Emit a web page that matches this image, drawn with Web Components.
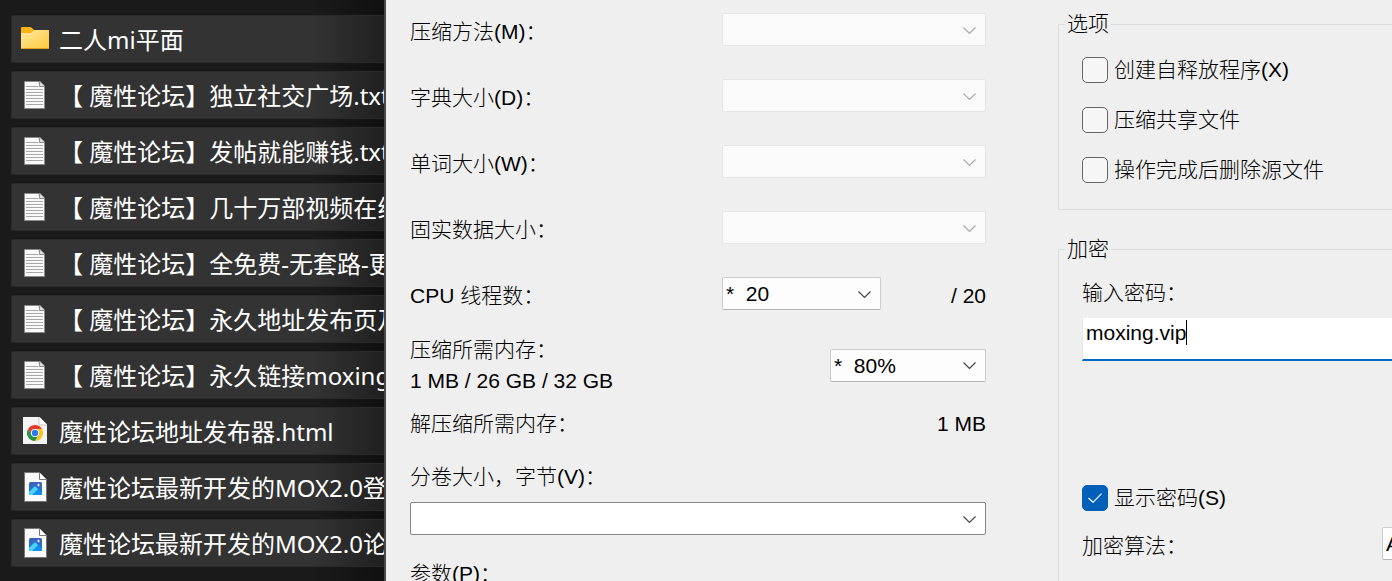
<!DOCTYPE html>
<html lang="zh-CN">
<head>
<meta charset="utf-8">
<title>压缩</title>
<style>
  html, body { margin: 0; height: 100%; }
  body { overflow: hidden; background: #1a1a1a; }
</style>
</head>
<body>
<app-desktop>
  <file-list slot="files">
    <file-row kind="folder">二人mi平面</file-row>
    <file-row kind="text">【 魔性论坛】独立社交广场.txt</file-row>
    <file-row kind="text">【 魔性论坛】发帖就能赚钱.txt</file-row>
    <file-row kind="text">【 魔性论坛】几十万部视频在线</file-row>
    <file-row kind="text">【 魔性论坛】全免费-无套路-更</file-row>
    <file-row kind="text">【 魔性论坛】永久地址发布页及</file-row>
    <file-row kind="text">【 魔性论坛】永久链接moxing</file-row>
    <file-row kind="chrome">魔性论坛地址发布器.html</file-row>
    <file-row kind="image">魔性论坛最新开发的MOX2.0登</file-row>
    <file-row kind="image">魔性论坛最新开发的MOX2.0论</file-row>
  </file-list>
  <archive-dialog slot="dialog"></archive-dialog>
</app-desktop>

<script>
class BaseElement extends HTMLElement {
  constructor() {
    super();
    this.attachShadow({ mode: 'open' });
  }
  connectedCallback() {
    if (!this.shadowRoot.childNodes.length) this.shadowRoot.innerHTML = this.template();
  }
}

customElements.define('app-desktop', class extends BaseElement {
  template() {
    return `
      <style>
        :host { display: grid; grid-template-columns: 384px minmax(0, 1fr); height: 100vh; overflow: hidden; }
      </style>
      <slot name="files"></slot>
      <slot name="dialog"></slot>`;
  }
});

customElements.define('file-list', class extends BaseElement {
  template() {
    return `
      <style>
        :host {
          display: flex; flex-direction: column; gap: 8px;
          overflow: hidden; box-sizing: border-box;
          padding: 15px 0 0 11px; color: #fff;
          background: linear-gradient(90deg, #1a1a1a calc(100% - 70px), #101010);
          font: 24px/32px "Noto Sans", "Noto Sans CJK SC", sans-serif;
        }
      </style>
      <slot></slot>`;
  }
});

const ICONS = {
  folder: `
    <defs><linearGradient id="g" x1="0" y1="0" x2="1" y2="1"><stop offset="0" stop-color="#ffe9a3"/><stop offset="1" stop-color="#ffc937"/></linearGradient></defs>
    <path d="M2 5a1 1 0 0 1 1-1h8q1 0 2 1l2 2h14a1 1 0 0 1 1 1v14H2z" fill="#f8b315"/>
    <path d="M2 10h9q1 0 2-1l2-2h14a1 1 0 0 1 1 1v17a1 1 0 0 1-1 1H3a1 1 0 0 1-1-1z" fill="url(#g)"/>
    <path d="M2 25a1 1 0 0 0 1 1h26a1 1 0 0 0 1-1z" fill="#e0a21b"/>`,
  text: `
    <path d="M5.500 2.500h15.500l4.500 4.500v22.500h-20z" fill="#fafafa" stroke="#8a8a8a"/>
    <path d="M20.500 2.500v5h5" fill="#ddd" stroke="#8a8a8a"/>
    <path d="M7 7.500h12M7 10.500h17M7 13.500h17M7 16.500h17M7 19.500h17M7 22.500h17M7 25.500h17" stroke="#a8a8a8"/>`,
  chrome: `
    <path d="M4 2h17l7 7v20H4z" fill="#f4f4f4"/>
    <path d="M20 2v8h8z" fill="#fff"/><path d="M20 2v8h8" fill="none" stroke="#c8c8c8"/><path d="M21 2h7v7z" fill="#333"/>
    <circle cx="16" cy="18" r="8" fill="#fff"/>
    <path d="M9.070 14A8 8 0 0 1 22.930 14H16a4 4 0 0 0-3.460 6z" fill="#e33b2e"/>
    <path d="M22.930 14A8 8 0 0 1 16 26l3.460-6A4 4 0 0 0 16 14z" fill="#fcc31e"/>
    <path d="M16 26A8 8 0 0 1 9.070 14l3.470 6A4 4 0 0 0 19.460 20z" fill="#229342"/>
    <circle cx="16" cy="18" r="4" fill="#fff"/><circle cx="16" cy="18" r="3.200" fill="#2b7de9"/>`,
  image: `
    <defs><linearGradient id="b" x1="0" y1="0" x2="0" y2="1"><stop offset="0" stop-color="#3a5fb8"/><stop offset="1" stop-color="#1583dc"/></linearGradient></defs>
    <path d="M5.500 1.500H20.500l7 7v22h-22z" fill="#fbfbfb" stroke="#777"/>
    <path d="M20.500 1.500v7h7" fill="#fff" stroke="#777"/>
    <rect x="10" y="11" width="13" height="13" rx="1.500" fill="url(#b)"/>
    <path d="M10 21l5-5q1-1 2 0l6 6v.500a1.500 1.500 0 0 1-1.500 1.500h-10A1.500 1.500 0 0 1 10 22.500z" fill="#1291ea"/>
    <path d="M10 21l5-5q1-1 2 0l2 2-6 6h-1.500A1.500 1.500 0 0 1 10 22.500z" fill="#4cd2f8"/>
    <path d="M19.500 12l.5 1.500 1.500.5-1.500.5-.5 1.500-.5-1.500-1.500-.5 1.500-.5z" fill="#fff"/>`
};

customElements.define('file-row', class extends BaseElement {
  template() {
    return `
      <style>
        /* the right end fades into the shadow that the dialog casts */
        :host {
          display: flex; align-items: center; gap: 8px; flex: none;
          box-sizing: border-box; height: 48px; padding-left: 7px;
          background: linear-gradient(90deg, #333 calc(100% - 70px), #202020);
          border: 1px solid #2a2a2a; border-right: 0;
          border-radius: 2px 0 0 2px; white-space: pre;
        }
        svg { width: 32px; height: 32px; flex: none; }
        span { padding-top: 2px; }
      </style>
      <svg viewBox="0 0 32 32" aria-hidden="true">${ICONS[this.getAttribute('kind')]}</svg>
      <span><slot></slot></span>`;
  }
});

/* Label with a drop-down; "stacked" puts the label above the control. */
customElements.define('combo-field', class extends BaseElement {
  template() {
    const value = this.getAttribute('value') || '';
    return `
      <style>
        :host { display: flex; justify-content: space-between; align-items: center; line-height: 31px; }
        :host([stacked]) { flex-direction: column; align-items: stretch; gap: 10px; }
        label { padding-top: var(--drop, 4px); white-space: nowrap; }
        :host([stacked]) label { padding-top: 0; }
        .side { display: flex; justify-content: space-between; width: var(--side, 264px); }
        :host([stacked]) .side { width: auto; }
        .box { display: grid; align-items: center; width: var(--combo, 100%); }
        select, svg { grid-area: 1 / 1; }
        select {
          appearance: none; box-sizing: border-box; width: 100%; height: 33px; margin: 0;
          padding: 0 32px 0 3px; font: inherit; line-height: 31px; color: #000;
          background: #fdfdfd; border: 1px solid #ccc; border-bottom-color: #b4b4b4; border-radius: 2px;
        }
        select:disabled { background: #fafafa; border-color: #e6e6e6; opacity: 1; }
        :host([stacked]) select { background: #fff; border-color: #868686; }
        svg { justify-self: end; width: 14px; height: 8px; margin-right: 9px; margin-top: 2px; pointer-events: none; fill: none; stroke: #444; }
        select:disabled + svg { stroke: #aaa; }
        .after { padding-top: 4px; }
      </style>
      <label for="s"><slot></slot></label>
      <div class="side">
        <div class="box">
          <select id="s" ${this.hasAttribute('disabled') ? 'disabled' : ''}><option>${value}</option></select>
          <svg viewBox="0 0 14 8" aria-hidden="true"><path d="M.500.500 6.500 6.500 12.500.500" stroke-width="1.200"/></svg>
        </div>
        <span class="after"><slot name="after"></slot></span>
      </div>`;
  }
});

customElements.define('check-item', class extends BaseElement {
  template() {
    return `
      <style>
        :host { display: block; }
        label { display: flex; align-items: center; gap: 6px; line-height: 26px; white-space: nowrap; }
        .box { display: grid; place-items: center; }
        input, svg { grid-area: 1 / 1; }
        input {
          appearance: none; box-sizing: border-box; width: 26px; height: 26px; margin: 0;
          background: #f6f6f6; border: 1px solid #666; border-radius: 5px;
        }
        input:checked { background: #005fb8; border-color: #005fb8; }
        svg { width: 14px; height: 10px; fill: none; stroke: #fff; stroke-width: 1.200; visibility: hidden; pointer-events: none; }
        input:checked + svg { visibility: visible; }
      </style>
      <label>
        <span class="box">
          <input type="checkbox" ${this.hasAttribute('checked') ? 'checked' : ''}>
          <svg viewBox="0 0 14 10" aria-hidden="true"><path d="M.500 5 5 9.300 13.500.700"/></svg>
        </span>
        <span><slot></slot></span>
      </label>`;
  }
});

customElements.define('group-box', class extends BaseElement {
  template() {
    return `
      <style>
        :host { display: block; }
        fieldset { box-sizing: border-box; height: 100%; min-width: 0; margin: 0; padding: 0 23px; border: 1px solid #dcdcdc; }
        legend { margin-left: -17px; padding: 0 2px; line-height: 26px; }
      </style>
      <fieldset>
        <legend><slot name="title"></slot></legend>
        <slot></slot>
      </fieldset>`;
  }
});

customElements.define('password-field', class extends BaseElement {
  template() {
    return `
      <style>
        :host { display: block; }
        label { display: block; line-height: 26px; }
        .box {
          display: flex; align-items: flex-start; box-sizing: border-box; height: 43px; margin-top: 12px;
          padding: 2px 0 0 3px; background: #fff; border-left: 1px solid #e8e8e8; border-bottom: 2px solid #0067c0;
        }
        input { field-sizing: content; margin: 0; padding: 0; border: 0; outline: 0; background: none; font: inherit; line-height: 26px; height: 26px; color: #000; }
        .caret { width: 1px; height: 25px; background: #000; }
      </style>
      <label for="p"><slot></slot></label>
      <div class="box"><input id="p" type="text" value="${this.getAttribute('value')}"><span class="caret"></span></div>`;
  }
});

customElements.define('archive-dialog', class extends BaseElement {
  template() {
    return `
      <style>
        :host {
          display: grid; grid-template-columns: 576px minmax(0, 1fr); column-gap: 72px;
          box-sizing: border-box; min-width: 0; overflow: hidden; padding-left: 24px;
          background: #efefef; border-left: 2px solid #4a4a4a; color: #000;
          font: 300 21px/26px "Liberation Sans", "Noto Sans CJK SC", sans-serif;
        }
        .settings { padding-top: 13px; }
        .params { display: flex; flex-direction: column; gap: 33px; }
        .params combo-field { height: 33px; }
        .threads { --combo: 159px; }
        .memory { --side: 156px; --drop: 0px; margin-top: 24px; }
        .lines { display: block; line-height: 31px; }
        .unpack { display: flex; justify-content: space-between; margin-top: 15px; }
        .volumes { margin-top: 24px; }
        .extra { margin-top: 26px; }
        .side { display: flex; flex-direction: column; gap: 26px; width: calc(100% + 24px); padding-top: 11px; }
        .checks { display: flex; flex-direction: column; gap: 24px; padding: 20px 0 26px; }
        .lock { padding-top: 18px; }
        .show { margin-top: 124px; }
        .algorithm { --side: 200px; margin-top: 15px; margin-right: -190px; }
      </style>
      <section class="settings">
        <div class="params">
          <combo-field disabled>压缩方法(M)：</combo-field>
          <combo-field disabled>字典大小(D)：</combo-field>
          <combo-field disabled>单词大小(W)：</combo-field>
          <combo-field disabled>固实数据大小：</combo-field>
          <combo-field class="threads" value="*&nbsp;&nbsp;20">CPU 线程数：<span slot="after">/ 20</span></combo-field>
        </div>
        <combo-field class="memory" value="*&nbsp;&nbsp;80%"><span class="lines">压缩所需内存：<br>1 MB / 26 GB / 32 GB</span></combo-field>
        <div class="unpack"><span>解压缩所需内存：</span><span>1 MB</span></div>
        <combo-field class="volumes" stacked>分卷大小，字节(V)：</combo-field>
        <div class="extra">参数(P)：</div>
      </section>
      <section class="side">
        <group-box>
          <span slot="title">选项</span>
          <div class="checks">
            <check-item>创建自释放程序(X)</check-item>
            <check-item>压缩共享文件</check-item>
            <check-item>操作完成后删除源文件</check-item>
          </div>
        </group-box>
        <group-box style="flex: 1">
          <span slot="title">加密</span>
          <div class="lock">
            <password-field value="moxing.vip">输入密码：</password-field>
            <check-item class="show" checked>显示密码(S)</check-item>
            <combo-field class="algorithm" value="AES-256">加密算法：</combo-field>
          </div>
        </group-box>
      </section>`;
  }
});
</script>
</body>
</html>
